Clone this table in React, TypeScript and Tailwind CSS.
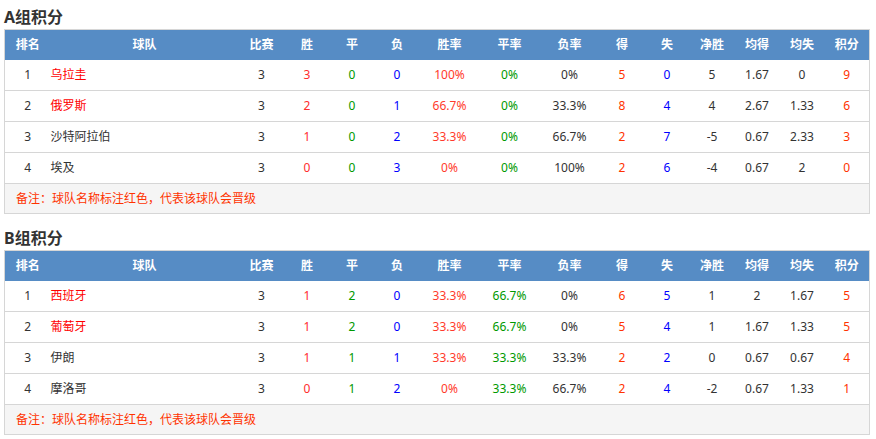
import React from "react";

type Row = {
  rank: number;
  team: string;
  q: boolean;
  p: string;
  w: string;
  d: string;
  l: string;
  wr: string;
  dr: string;
  lr: string;
  gf: string;
  ga: string;
  gd: string;
  af: string;
  aa: string;
  pts: string;
};

const mk = (
  rank: number,
  team: string,
  q: boolean,
  v: string
): Row => {
  const [p, w, d, l, wr, dr, lr, gf, ga, gd, af, aa, pts] = v.split(" ");
  return { rank, team, q, p, w, d, l, wr, dr, lr, gf, ga, gd, af, aa, pts };
};

const groupA: Row[] = [
  mk(1, "乌拉圭", true, "3 3 0 0 100% 0% 0% 5 0 5 1.67 0 9"),
  mk(2, "俄罗斯", true, "3 2 0 1 66.7% 0% 33.3% 8 4 4 2.67 1.33 6"),
  mk(3, "沙特阿拉伯", false, "3 1 0 2 33.3% 0% 66.7% 2 7 -5 0.67 2.33 3"),
  mk(4, "埃及", false, "3 0 0 3 0% 0% 100% 2 6 -4 0.67 2 0"),
];

const groupB: Row[] = [
  mk(1, "西班牙", true, "3 1 2 0 33.3% 66.7% 0% 6 5 1 2 1.67 5"),
  mk(2, "葡萄牙", true, "3 1 2 0 33.3% 66.7% 0% 5 4 1 1.67 1.33 5"),
  mk(3, "伊朗", false, "3 1 1 1 33.3% 33.3% 33.3% 2 2 0 0.67 0.67 4"),
  mk(4, "摩洛哥", false, "3 0 1 2 0% 33.3% 66.7% 2 4 -2 0.67 1.33 1"),
];

const widths = [46, 188, 46, 45, 45, 45, 60, 60, 60, 45, 45, 45, 45, 45, 45];
const heads = ["排名", "球队", "比赛", "胜", "平", "负", "胜率", "平率", "负率", "得", "失", "净胜", "均得", "均失", "积分"];

function Table({ title, rows, first }: { title: string; rows: Row[]; first?: boolean }) {
  return (
    <div>
      <div
        className={
          (first ? "pt-[5px]" : "pt-[10px] mt-[2px]") +
          " pl-[4px] text-[16px] font-bold leading-[24px] text-[#333]"
        }
      >
        {title}
      </div>
      <table className="ml-[4px] w-[866px] table-fixed border-collapse border border-[#d6d6d6] text-[12px] text-[#333]">
        <colgroup>
          {widths.map((w, i) => (
            <col key={i} style={{ width: w }} />
          ))}
        </colgroup>
        <thead>
          <tr className="h-[30px] bg-[#568cc5] text-white">
            {heads.map((h) => (
              <th key={h} className="p-0 text-center font-bold">
                {h}
              </th>
            ))}
          </tr>
        </thead>
        <tbody>
          {rows.map((r) => (
            <tr key={r.rank} className="h-[31px] border-b border-[#d6d6d6] bg-white">
              <td className="p-0 text-center">{r.rank}</td>
              <td className={"p-0 text-left " + (r.q ? "text-[#ff0000]" : "text-[#333]")}>{r.team}</td>
              <td className="p-0 text-center">{r.p}</td>
              <td className="p-0 text-center text-[#ff2d2d]">{r.w}</td>
              <td className="p-0 text-center text-[#009900]">{r.d}</td>
              <td className="p-0 text-center text-[#0000ff]">{r.l}</td>
              <td className="p-0 text-center text-[#ff3b2b]">{r.wr}</td>
              <td className="p-0 text-center text-[#009900]">{r.dr}</td>
              <td className="p-0 text-center">{r.lr}</td>
              <td className="p-0 text-center text-[#ff3300]">{r.gf}</td>
              <td className="p-0 text-center text-[#0000ff]">{r.ga}</td>
              <td className="p-0 text-center">{r.gd}</td>
              <td className="p-0 text-center">{r.af}</td>
              <td className="p-0 text-center">{r.aa}</td>
              <td className="p-0 text-center text-[#ff3300]">{r.pts}</td>
            </tr>
          ))}
          <tr className="h-[30px] bg-[#f5f5f5]">
            <td colSpan={15} className="p-0 pl-[11px] text-left text-[#ff3300]">
              备注：球队名称标注红色，代表该球队会晋级
            </td>
          </tr>
        </tbody>
      </table>
    </div>
  );
}

export default function App() {
  return (
    <div
      className="h-[439px] w-[876px] overflow-hidden bg-white"
      style={{ fontFamily: '"Noto Sans", "Noto Sans CJK SC", sans-serif' }}
    >
      <Table title="A组积分" rows={groupA} first />
      <Table title="B组积分" rows={groupB} />
    </div>
  );
}
